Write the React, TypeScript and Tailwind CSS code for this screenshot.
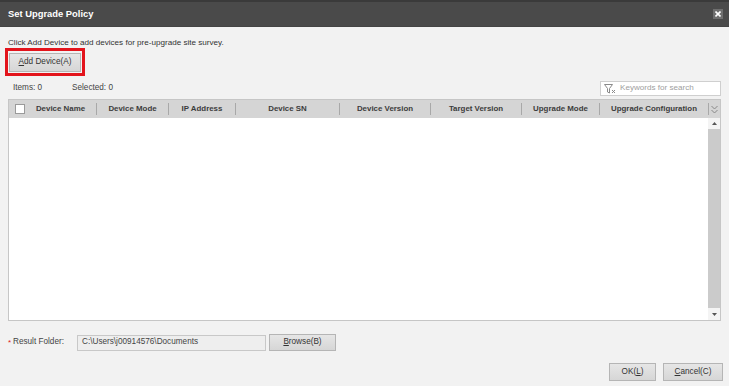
import React from 'react'

const COLUMNS = [
  { label: 'Device Name', w: 72 },
  { label: 'Device Mode', w: 72 },
  { label: 'IP Address', w: 67 },
  { label: 'Device SN', w: 104 },
  { label: 'Device Version', w: 91 },
  { label: 'Target Version', w: 91 },
  { label: 'Upgrade Mode', w: 78 },
  { label: 'Upgrade Configuration', w: 109 },
]

function Btn({ pre, key1, post, className }: { pre?: string; key1: string; post: string; className: string }) {
  return (
    <button
      className={`flex items-center justify-center border border-[#b5b5b5] bg-gradient-to-b from-[#e6e6e6] to-[#d6d6d6] text-[8.2px] text-[#333] leading-none whitespace-nowrap ${className}`}
    >
      <span>
        {pre}
        <span className="underline">{key1}</span>
        {post}
      </span>
    </button>
  )
}

export default function App() {
  return (
    <div
      className="w-[729px] h-[386px] bg-[#f2f2f2] flex flex-col overflow-hidden"
      style={{ fontFamily: '"Liberation Sans", Arial, sans-serif' }}
    >
      {/* Title bar */}
      <div className="h-[27px] shrink-0 flex items-center justify-between pl-[8px] pr-[6px] bg-[#4a4a4a] border-t-2 border-[#3a3a3a] border-b border-b-[#444]">
        <span className="text-white font-bold text-[9.4px] pt-[1px]">Set Upgrade Policy</span>
        <div className="w-[10px] h-[10px] bg-[#6e6e6e] flex items-center justify-center">
          <svg width="6" height="6" viewBox="0 0 6 6">
            <path d="M0.5 0.5 L5.5 5.5 M5.5 0.5 L0.5 5.5" stroke="#fff" strokeWidth="1.6" />
          </svg>
        </div>
      </div>

      <div className="flex-1 flex flex-col pl-[8px] pr-[8px] text-[#333]">
        <div className="pt-[10px] text-[8.1px] leading-[12px] whitespace-nowrap">
          Click Add Device to add devices for pre-upgrade site survey.
        </div>

        <div className="mt-[-1px] -ml-[3px] w-fit border-[3px] border-[#e3141c] px-[1px] pt-[2px] pb-[1px]">
          <Btn key1="A" post="dd Device(A)" className="w-[72px] h-[19px]" />
        </div>

        {/* Items row */}
        <div className="mt-[5px] h-[15px] flex items-center justify-between">
          <div className="flex text-[8.2px] text-[#444] pl-[5px] whitespace-nowrap">
            <span className="w-[59px]">Items: 0</span>
            <span>Selected: 0</span>
          </div>
          <div className="w-[121px] h-[15px] bg-white border border-[#cfcfcf] flex items-center pl-[3px] gap-[4px]">
            <svg width="12" height="10" viewBox="0 0 12 10">
              <path d="M0.5 0.5 H8.5 L5.5 4.5 V9 L3.5 8 V4.5 Z" fill="none" stroke="#8a8a8a" strokeWidth="1" />
              <path d="M8 6 L11 9 M11 6 L8 9" stroke="#8a8a8a" strokeWidth="1" />
            </svg>
            <span className="text-[8.1px] text-[#a0a0a0] whitespace-nowrap">Keywords for search</span>
          </div>
        </div>

        {/* Table */}
        <div className="mt-[3px] h-[222px] shrink-0 border border-[#c6c6c6] bg-white flex flex-col">
          <div className="h-[18px] shrink-0 bg-[#d5d5d5] flex items-center">
            <div className="w-[16px] shrink-0 flex justify-end">
              <div className="w-[10px] h-[10px] bg-white border border-[#9a9a9a]" />
            </div>
            {COLUMNS.map((c) => (
              <div
                key={c.label}
                className="shrink-0 h-[12px] flex items-center justify-center text-[7.9px] font-bold text-[#3c3c3c] whitespace-nowrap border-r border-[#a8a8a8]"
                style={{ width: c.w }}
              >
                {c.label}
              </div>
            ))}
            <div className="flex-1 flex justify-center">
              <svg width="7" height="9" viewBox="0 0 7 9">
                <path d="M0.5 1 L3.5 4 L6.5 1 M0.5 5 L3.5 8 L6.5 5" fill="none" stroke="#888" strokeWidth="1" />
              </svg>
            </div>
          </div>
          <div className="flex-1 flex">
            <div className="flex-1" />
            <div className="w-[12px] flex flex-col bg-[#f4f4f4]">
              <div className="h-[11px] flex items-center justify-center">
                <svg width="5" height="3" viewBox="0 0 5 3">
                  <path d="M0 3 L2.5 0 L5 3 Z" fill="#555" />
                </svg>
              </div>
              <div className="flex-1 bg-[#cbcbcb]" />
              <div className="h-[12px] flex items-center justify-center">
                <svg width="5" height="3" viewBox="0 0 5 3">
                  <path d="M0 0 L2.5 3 L5 0 Z" fill="#555" />
                </svg>
              </div>
            </div>
          </div>
        </div>

        {/* Result folder */}
        <div className="mt-[13px] h-[17px] flex items-center whitespace-nowrap">
          <span className="text-[#e02020] text-[8px] w-[5px]">*</span>
          <span className="text-[8.2px] text-[#444] w-[64px]">Result Folder:</span>
          <div className="w-[189px] h-[16px] bg-[#eeeeee] border border-[#c8c8c8] flex items-center pl-[4px] text-[8.2px] text-[#444]">
            C:\Users\j00914576\Documents
          </div>
          <Btn key1="B" post="rowse(B)" className="ml-[3px] w-[67px] h-[17px]" />
        </div>

        {/* Footer buttons */}
        <div className="mt-[12px] flex justify-end gap-[7px] -mr-[2px]">
          <Btn pre="OK(" key1="L" post=")" className="w-[47px] h-[18px]" />
          <Btn key1="C" post="ancel(C)" className="w-[60px] h-[18px]" />
        </div>
      </div>
    </div>
  )
}
